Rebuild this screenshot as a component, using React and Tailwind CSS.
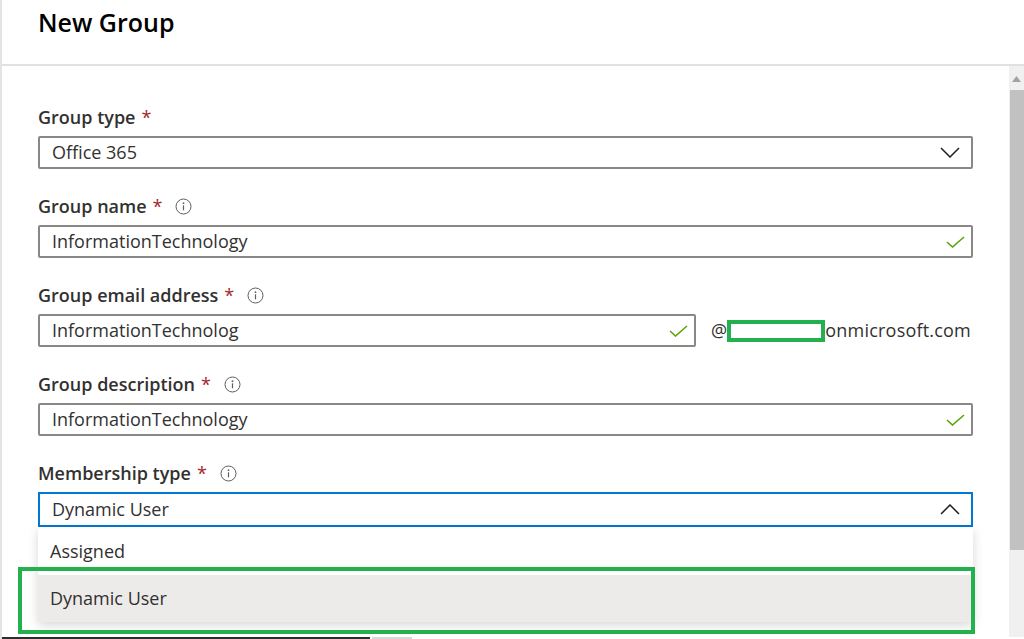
import React from "react";

function InfoIcon() {
  return (
    <svg width="17" height="17" viewBox="0 0 17 17" className="shrink-0">
      <circle cx="8.5" cy="8.5" r="7.5" fill="none" stroke="#605e5c" strokeWidth="1" />
      <circle cx="8.5" cy="5.2" r="0.9" fill="#605e5c" />
      <path d="M8.5 7.3v5" stroke="#605e5c" strokeWidth="1.2" />
    </svg>
  );
}

function CheckIcon() {
  return (
    <svg width="19" height="12" viewBox="0 0 19 12" className="shrink-0">
      <path d="M1 6l5.5 5L18 1" fill="none" stroke="#5ea30b" strokeWidth="1.6" />
    </svg>
  );
}

function Chevron({ up }) {
  return (
    <svg width="20" height="11" viewBox="0 0 20 11" className="shrink-0">
      <path
        d={up ? "M1 10L10 1l9 9" : "M1 1l9 9 9-9"}
        fill="none"
        stroke="#201f1e"
        strokeWidth="1.5"
      />
    </svg>
  );
}

function Label({ text, info }) {
  return (
    <div className="flex items-center h-6 mb-[7px]">
      <span className="text-[18px] font-semibold text-[#323130]">{text}</span>
      <span className="ml-[6px] text-[18px] text-[#a4262c]">*</span>
      {info && (
        <span className="ml-[13px] flex">
          <InfoIcon />
        </span>
      )}
    </div>
  );
}

function TextField({ value, className = "" }) {
  return (
    <div
      className={`h-[33px] border-2 border-[#8a8886] rounded-[2px] flex items-center justify-between pl-[12px] pr-[6px] text-[18px] text-[#323130] ${className}`}
    >
      <span>{value}</span>
      <CheckIcon />
    </div>
  );
}

export default function App() {
  return (
    <div className="w-[1024px] h-[639px] overflow-hidden bg-white flex flex-col border-l-2 border-[#e4e4e4] font-['Open_Sans',sans-serif]">
      <div className="h-[66px] shrink-0 border-b-2 border-[#e1e1e1] pl-[36px] pt-[6px]">
        <h1 className="text-[25px] leading-[32px] font-semibold text-black">New Group</h1>
      </div>

      <div className="flex flex-1 min-h-0">
        <div className="relative flex-1 pl-[36px] pr-[36px] pt-[39px]">
          <div className="mb-[25px]">
            <Label text="Group type" />
            <div className="h-[33px] border-2 border-[#8a8886] rounded-[2px] flex items-center justify-between pl-[12px] pr-[11px] text-[18px] text-[#323130]">
              <span>Office 365</span>
              <Chevron />
            </div>
          </div>

          <div className="mb-[25px]">
            <Label text="Group name" info />
            <TextField value="InformationTechnology" />
          </div>

          <div className="mb-[25px]">
            <Label text="Group email address" info />
            <div className="flex items-center">
              <TextField value="InformationTechnolog" className="w-[658px]" />
              <div className="ml-[15px] flex items-center text-[18px] text-[#323130] tracking-[0.2px]">
                <span>@</span>
                <span className="inline-block w-[98px] h-[22px] border-[4px] border-[#22b14c]" />
                <span>onmicrosoft.com</span>
              </div>
            </div>
          </div>

          <div className="mb-[25px]">
            <Label text="Group description" info />
            <TextField value="InformationTechnology" />
          </div>

          <div>
            <Label text="Membership type" info />
            <div className="h-[35px] border-2 border-[#0078d4] flex items-center justify-between pl-[12px] pr-[11px] text-[18px] text-[#323130]">
              <span>Dynamic User</span>
              <Chevron up />
            </div>
            <div className="bg-white shadow-[0_3px_10px_rgba(0,0,0,0.16)] text-[18px] text-[#323130]">
              <div className="h-[48px] flex items-center pl-[12px]">Assigned</div>
              <div className="h-[47px] flex items-center pl-[12px] bg-[#edebe9]">Dynamic User</div>
            </div>
          </div>

          {/* highlight around the selected option */}
          <div className="absolute left-[16px] top-[501px] w-[957px] h-[67px] border-[4px] border-[#22b14c] pointer-events-none" />
        </div>

        <div className="w-[15px] shrink-0 bg-[#f0f0f0] flex flex-col items-center">
          <svg width="9" height="6" viewBox="0 0 9 6" className="mt-[10px] mb-[8px]">
            <path d="M0 6L4.5 0 9 6z" fill="#a3a3a3" />
          </svg>
          <div className="w-[14px] ml-[1px] h-[460px] bg-[#c1c1c1]" />
        </div>
      </div>

      <div className="h-[2px] shrink-0 flex">
        <div className="w-[368px] bg-[#2d2d2d]" />
        <div className="w-[40px] ml-[2px] bg-[#d8d8d8]" />
      </div>
    </div>
  );
}
